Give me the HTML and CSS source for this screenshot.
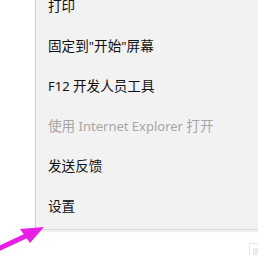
FILE: index.html
```html
<!DOCTYPE html>
<html lang="zh-CN">
<head>
<meta charset="utf-8">
<link rel="stylesheet" href="styles.css">
</head>
<body>
<div class="page">
  <ul class="menu">
    <li class="item">打印</li>
    <li class="item">固定到<span class="latin">"</span>开始<span class="latin">"</span>屏幕</li>
    <li class="item"><span class="latin">F12 </span>开发人员工具</li>
    <li class="item disabled">使用<span class="latin"> Internet Explorer </span>打开</li>
    <li class="item">发送反馈</li>
    <li class="item">设置</li>
  </ul>
  <svg class="arrow" width="60" height="40" viewBox="0 0 60 40">
    <path d="M-2 28 L28 14" stroke="#e61ee6" stroke-width="5" stroke-linecap="butt"/>
    <polygon points="44,6 20,8 30,22" fill="#e61ee6"/>
  </svg>
  <svg class="corner" width="12" height="16" viewBox="0 0 12 16">
    <rect x="2.5" y="3.5" width="10" height="12" fill="none" stroke="#e6e6e6"/>
    <rect x="6" y="8" width="6" height="8" fill="#ececec"/>
  </svg>
</div>
</body>
</html>
```
FILE: styles.css
```css
html, body {
  margin: 0;
  padding: 0;
  background: #ffffff;
}
.page {
  position: relative;
  width: 258px;
  height: 255px;
  overflow: hidden;
}
.menu {
  list-style: none;
  margin: -14px 0 0 35px;
  padding: 0 0 3px 0;
  background: #f2f2f2;
  border-left: 1px solid #cfcfcf;
  border-bottom: 1px solid #dcdcdc;
  box-shadow: 0 2px 1px rgba(0,0,0,0.06);
  font-family: "Noto Sans", "Noto Sans CJK SC", sans-serif;
  font-size: 13.6px;
  color: #111111;
}
.item {
  height: 40px;
  line-height: 40px;
  padding-left: 12px;
  white-space: nowrap;
}
.latin {
  font-size: 13px;
}
.disabled {
  color: #a6a6a6;
}
.arrow {
  position: absolute;
  left: 0;
  top: 221px;
}
.corner {
  position: absolute;
  left: 247px;
  top: 240px;
}
```
